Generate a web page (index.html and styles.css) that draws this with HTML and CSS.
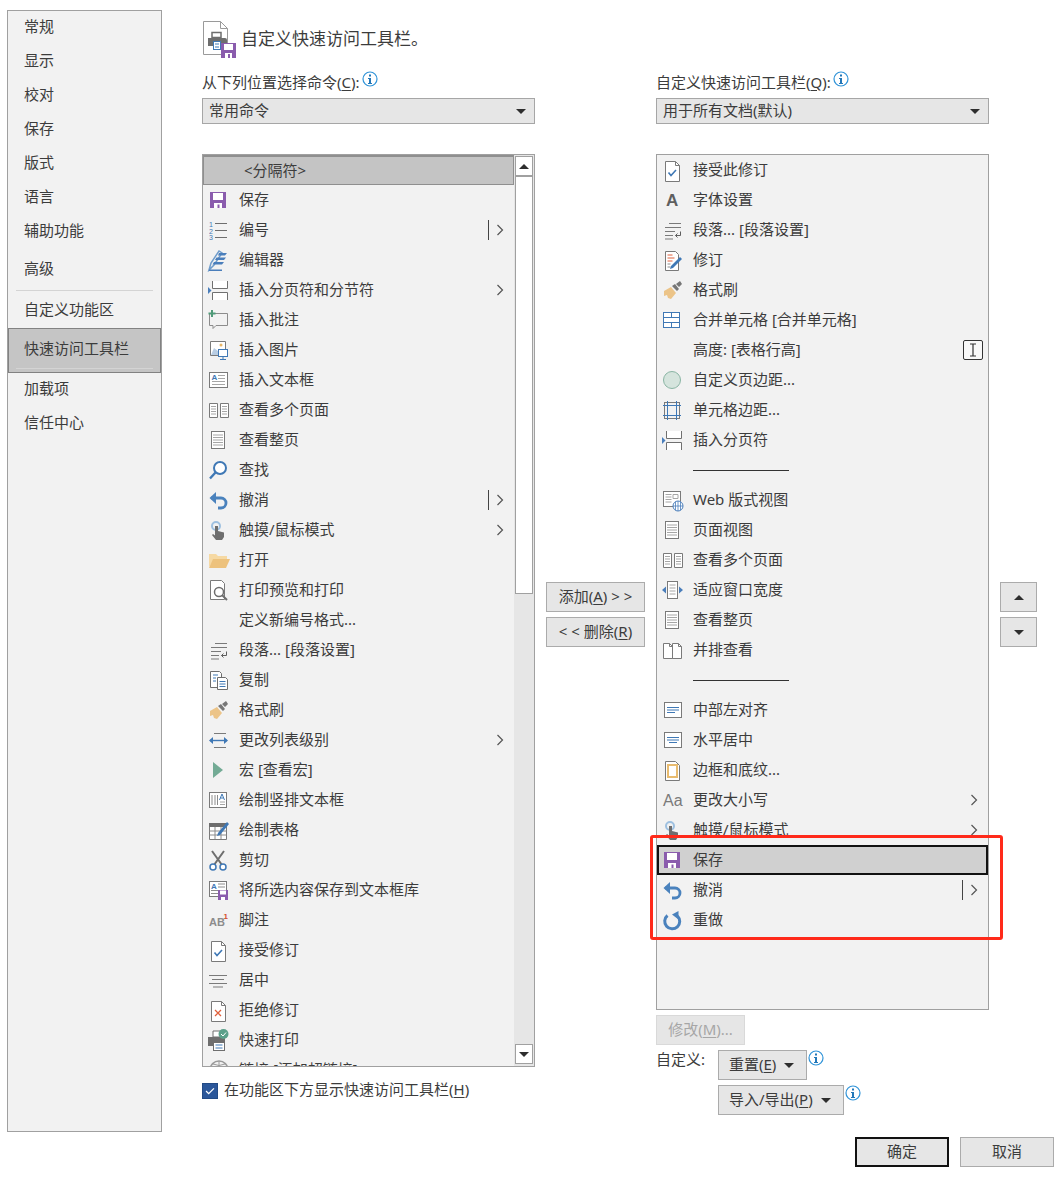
FILE: index.html
```html
<!DOCTYPE html>
<html lang="zh-CN">
<head>
  <meta charset="UTF-8">
  <title>自定义快速访问工具栏</title>
  <link rel="stylesheet" href="styles.css">
</head>
<body>
  <svg class="defs" width="0" height="0">
    <defs>
      <symbol id="i-save" viewBox="0 0 24 24"><rect x="4" y="4" width="16" height="16" fill="#8a5cad"/><rect x="7" y="5" width="10" height="7" fill="#fff"/><rect x="8" y="15" width="8" height="5" fill="#fff"/><rect x="11.500" y="16.500" width="2" height="3.500" fill="#8a5cad"/></symbol>
      <symbol id="i-number" viewBox="0 0 24 24"><text class="tiny" x="3" y="8.500" fill="#3f78b5">1</text><text class="tiny" x="3" y="15.500" fill="#3f78b5">2</text><text class="tiny" x="3" y="22" fill="#3f78b5">3</text><path d="M9 5.500h12M9 12.500h12M9 19.500h12" stroke="#6e6e6e" fill="none"/></symbol>
      <symbol id="i-editor" viewBox="0 0 24 24"><path d="M3 22l2-7L13 3l3 2-8 12z" fill="none" stroke="#6f9ccb" stroke-width="1.500"/><path d="M13 5h8l-2 2.500h-7zM10.500 9.500h9.500l-2 2.500H9zM8 14h10l-2 2.500H6.500zM3 21.500h13v1.500H3z" fill="#4a7ebb"/></symbol>
      <symbol id="i-break" viewBox="0 0 24 24"><rect x="6" y="3" width="16" height="8" fill="#fff"/><rect x="6" y="14" width="16" height="8" fill="#fff"/><path d="M6.500 3v7.500h15V3M6.500 22v-7.500h15V22" stroke="#707070" fill="none"/><path d="M2 9l3.500 3.500L2 16z" fill="#4a7ebb"/></symbol>
      <symbol id="i-comment" viewBox="0 0 24 24"><path d="M3.500 5.500h18v12H10l-3 3v-3H3.500z" fill="none" stroke="#8c8c8c"/><path d="M6 2v7M2.500 5.500h7" stroke="#4f9a78" stroke-width="2"/></symbol>
      <symbol id="i-picture" viewBox="0 0 24 24"><path d="M4.500 3.500h15v14h-15z" fill="#fff" stroke="#7a7a7a"/><circle cx="15" cy="7" r="1.500" fill="#e8b565"/><path d="M5 17l3-7 4 3v4z" fill="#b9cde3"/><rect x="12.500" y="11.500" width="9" height="7" fill="#fff" stroke="#3f78b5"/><path d="M17 18.500v3M14 21.500h6" stroke="#3f78b5"/></symbol>
      <symbol id="i-textbox" viewBox="0 0 24 24"><rect x="3.500" y="4.500" width="18" height="15" fill="#fff" stroke="#7a7a7a"/><text class="tiny-b" x="5.500" y="12" fill="#3f78b5">A</text><path d="M12 7.500h7M12 10.500h7M6 13.500h13M6 16.500h13" stroke="#a6a6a6"/></symbol>
      <symbol id="i-multi" viewBox="0 0 24 24"><path d="M3.500 5.500h8v14h-8zM14.500 5.500h8v14h-8z" fill="#fff" stroke="#7a7a7a"/><path d="M5 8.500h5M5 11h5M5 13.500h5M5 16h5M16 8.500h5M16 11h5M16 13.500h5M16 16h5" stroke="#a6a6a6"/></symbol>
      <symbol id="i-page" viewBox="0 0 24 24"><rect x="5.500" y="3.500" width="13" height="17" fill="#fff" stroke="#7a7a7a"/><path d="M7 7h10M7 9.500h10M7 12h10M7 14.500h10M7 17h10" stroke="#a6a6a6"/></symbol>
      <symbol id="i-find" viewBox="0 0 24 24"><circle cx="14" cy="10" r="6" fill="#fff" stroke="#3f78b5" stroke-width="2"/><path d="M9.500 14.500L4 20.500" stroke="#3f78b5" stroke-width="2.400"/></symbol>
      <symbol id="i-undo" viewBox="0 0 24 24"><path d="M5 10h10a5 5 0 0 1 0 10h-3" fill="none" stroke="#4a82bd" stroke-width="2.800"/><path d="M10 4L3.500 10l6.500 6z" fill="#4a82bd"/></symbol>
      <symbol id="i-redo" viewBox="0 0 24 24"><path d="M7.500 7.500a7.500 7.500 0 1 0 10 .500" fill="none" stroke="#4a82bd" stroke-width="3"/><path d="M18.500 3v8.500L12 6.500z" fill="#4a82bd"/></symbol>
      <symbol id="i-touch" viewBox="0 0 24 24"><circle cx="10" cy="8" r="4" fill="none" stroke="#9ec0e0" stroke-width="2"/><path d="M9 8h3v5l6 1.500V19l-2 3h-6l-4-5 1-1 2 1.500z" fill="#6e6e6e"/></symbol>
      <symbol id="i-open" viewBox="0 0 24 24"><path d="M3 19V6h7l2 2h9v3H9z" fill="#f6d9a3"/><path d="M3 20L7 11h17l-4 9z" fill="#edc27d"/></symbol>
      <symbol id="i-preview" viewBox="0 0 24 24"><path d="M4.500 2.500h11l3 3v16h-14z" fill="#fff" stroke="#7a7a7a"/><circle cx="13" cy="14" r="4.500" fill="#fff" stroke="#6e6e6e" stroke-width="1.500"/><path d="M16 17l5 5" stroke="#6e6e6e" stroke-width="2"/></symbol>
      <symbol id="i-para" viewBox="0 0 24 24"><path d="M9 5.500h12M5 9.500h16M5 13.500h10M5 17.500h8M5 21h8" stroke="#7a7a7a" fill="none"/><path d="M20.500 13.500v4h-5M17.500 15.500l-2 2 2 2" stroke="#5d5d5d" fill="none"/></symbol>
      <symbol id="i-copy" viewBox="0 0 24 24"><path d="M4.500 3.500h9l2 2v14h-11z" fill="#fff" stroke="#6e6e6e"/><path d="M11.500 9.500h8l2 2v10h-10z" fill="#fff" stroke="#6e6e6e"/><path d="M7 7h5M7 10h3M7 13h3M13.500 13.500h6M13.500 16h6M13.500 18.500h6" stroke="#3f78b5"/></symbol>
      <symbol id="i-brush" viewBox="0 0 24 24"><path d="M4 13l7-4 5 6-5 6-3-1-1-3-3 1z" fill="#ecc488"/><path d="M12 8l3-2 4 5-2 2zM16 6l4-3 2 3-3 3z" fill="#767676"/></symbol>
      <symbol id="i-level" viewBox="0 0 24 24"><path d="M8 5.500h12M8 19.500h12" stroke="#7a7a7a"/><path d="M4 12.500h17" stroke="#3f78b5" stroke-width="1.400"/><path d="M3 12.500l4-3.500v7zM22 12.500l-4-3.500v7z" fill="#3f78b5"/></symbol>
      <symbol id="i-macro" viewBox="0 0 24 24"><path d="M7 4l10 8-10 8z" fill="#73ab95"/></symbol>
      <symbol id="i-vbox" viewBox="0 0 24 24"><rect x="3.500" y="4.500" width="17" height="15" fill="#fff" stroke="#7a7a7a"/><path d="M6 7v10M9 7v10M11.500 7v10" stroke="#8c8c8c"/><path d="M13.500 12l2.500-6 2.500 6M14.500 10h3" stroke="#3f78b5" fill="none"/><path d="M14 14h5M14 16.500h5" stroke="#a6a6a6"/></symbol>
      <symbol id="i-table" viewBox="0 0 24 24"><path d="M3.500 5.500h17v16h-17z" fill="#fff" stroke="#7a7a7a"/><rect x="3" y="5" width="18" height="4" fill="#6e6e6e"/><path d="M3.500 13h17M3.500 17h17M9 9v12M15 9v12" stroke="#8c8c8c"/><path d="M12 15l9-11 2 2-9 11-3 1z" fill="#3f78b5"/></symbol>
      <symbol id="i-cut" viewBox="0 0 24 24"><path d="M6 3l10 14M18 3L8 17" stroke="#6e6e6e" stroke-width="2"/><circle cx="7" cy="19" r="3" fill="#fff" stroke="#3f78b5" stroke-width="1.500"/><circle cx="17" cy="19" r="3" fill="#fff" stroke="#3f78b5" stroke-width="1.500"/></symbol>
      <symbol id="i-gallery" viewBox="0 0 24 24"><rect x="3.500" y="3.500" width="17" height="15" fill="#fff" stroke="#7a7a7a"/><text class="tiny-b" x="5" y="10.500" fill="#3f78b5">A</text><path d="M12 6h7M12 9h7M5 12.500h7M5 15.500h7" stroke="#8c8c8c"/><rect x="12" y="12" width="10" height="10" fill="#8a5cad"/><rect x="14" y="12.500" width="6" height="4" fill="#fff"/><rect x="15" y="19" width="4" height="3" fill="#fff"/></symbol>
      <symbol id="i-foot" viewBox="0 0 24 24"><text class="ab" x="3" y="18" fill="#8c8c8c">AB</text><text class="tiny-b" x="17.500" y="11" fill="#d4502a">1</text></symbol>
      <symbol id="i-accept" viewBox="0 0 24 24"><path d="M5.500 3.500h10l4 4v16h-14z" fill="#fff" stroke="#7a7a7a"/><path d="M15.500 3.500v4h4" fill="none" stroke="#7a7a7a"/><path d="M8.500 14.500l2.500 3 5-5.500" fill="none" stroke="#3f78b5" stroke-width="1.600"/></symbol>
      <symbol id="i-center" viewBox="0 0 24 24"><path d="M3 7.500h18M6 11.500h12M3 15.500h18M7 19h10" stroke="#7a7a7a"/></symbol>
      <symbol id="i-reject" viewBox="0 0 24 24"><path d="M5.500 3.500h10l4 4v16h-14z" fill="#fff" stroke="#7a7a7a"/><path d="M15.500 3.500v4h4" fill="none" stroke="#7a7a7a"/><path d="M9 12l6 6M15 12l-6 6" stroke="#e0603c" stroke-width="1.300"/></symbol>
      <symbol id="i-qprint" viewBox="0 0 24 24"><path d="M7 3h10v6H7z" fill="#fff" stroke="#6e6e6e"/><path d="M2 9h17v9H2z" fill="#6e6e6e"/><rect x="7.500" y="14.500" width="11" height="8" fill="#fff" stroke="#6e6e6e"/><path d="M9.500 17h7M9.500 20h7" stroke="#3f78b5"/><circle cx="17.500" cy="6" r="5" fill="#5ba08a"/><path d="M15 6l2 2 3-3.500" fill="none" stroke="#fff"/></symbol>
      <symbol id="i-link" viewBox="0 0 24 24"><circle cx="13" cy="12" r="9" fill="none" stroke="#9a9a9a" stroke-width="1.500"/><path d="M4 12h18M13 3v18M7 6q6 3 12 0" fill="none" stroke="#9a9a9a"/></symbol>
      <symbol id="i-merge" viewBox="0 0 24 24"><rect x="3.500" y="4.500" width="16" height="15" fill="#fff" stroke="#3f78b5"/><path d="M3.500 9.500h16M3.500 14.500h16M11.500 4.500v5M11.500 14.500v5" stroke="#3f78b5"/></symbol>
      <symbol id="i-revise" viewBox="0 0 24 24"><path d="M5.500 3.500h10l3 3v16h-13z" fill="#fff" stroke="#7a7a7a"/><path d="M7.500 7h5M7.500 10h7M7.500 13h5" stroke="#e0603c"/><path d="M7.500 16h3M7.500 19h3" stroke="#8c8c8c"/><path d="M10 21l1-3 9-9 2 2-9 9z" fill="#3f78b5"/></symbol>
      <symbol id="i-circle" viewBox="0 0 24 24"><circle cx="12" cy="12" r="8.500" fill="#d5e4dd" stroke="#8ab5a4"/></symbol>
      <symbol id="i-cell" viewBox="0 0 24 24"><rect x="4.500" y="4.500" width="15" height="16" fill="none" stroke="#7a7a7a"/><path d="M7.500 3v19M16.500 3v19M3 7.500h18M3 17.500h18" stroke="#3f78b5"/></symbol>
      <symbol id="i-web" viewBox="0 0 24 24"><rect x="3.500" y="3.500" width="17" height="15" fill="#fff" stroke="#7a7a7a"/><path d="M5.500 6.500h6M5.500 9h6M5.500 11.500h6M5.500 14h6M13 6.500h5v4h-5z" fill="none" stroke="#a6a6a6"/><circle cx="18" cy="18" r="5" fill="#fff" stroke="#4a7ebb"/><path d="M13 18h10M18 13v10M15.500 14v8M20.500 14v8" stroke="#4a7ebb" stroke-width=".800"/></symbol>
      <symbol id="i-fit" viewBox="0 0 24 24"><rect x="7.500" y="3.500" width="10" height="17" fill="#fff" stroke="#7a7a7a"/><path d="M9.500 7h6M9.500 10h6M9.500 13h6M9.500 16h6" stroke="#a6a6a6"/><path d="M2 12l4-3.500v7zM23 12l-4-3.500v7z" fill="#4a7ebb"/></symbol>
      <symbol id="i-side" viewBox="0 0 24 24"><path d="M3.500 5.500h6l3 3v12h-9zM12.500 20.500h9v-12l-3-3h-6v15z" fill="#fff" stroke="#7a7a7a"/><path d="M9.500 5.500v3h3M18.500 5.500v3h3" fill="none" stroke="#7a7a7a"/></symbol>
      <symbol id="i-left" viewBox="0 0 24 24"><rect x="4.500" y="4.500" width="17" height="15" fill="#fff" stroke="#7a7a7a"/><path d="M7 9.500h12M7 12h12M7 14.500h8" stroke="#3f78b5"/></symbol>
      <symbol id="i-hcenter" viewBox="0 0 24 24"><rect x="4.500" y="4.500" width="17" height="15" fill="#fff" stroke="#7a7a7a"/><path d="M7 9.500h12M7 12h12M9 14.500h8" stroke="#3f78b5"/></symbol>
      <symbol id="i-border" viewBox="0 0 24 24"><path d="M5.500 3.500h10l4 4v15h-14z" fill="#fff" stroke="#7a7a7a"/><rect x="8" y="7" width="9" height="12" fill="#fff" stroke="#e8bb6f" stroke-width="2"/></symbol>
      <symbol id="i-more" viewBox="0 0 8 12"><path d="M1.500 1l5 5-5 5" fill="none" stroke="#555" stroke-width="1.200"/></symbol>
      <symbol id="i-info" viewBox="0 0 16 16"><circle cx="8" cy="8" r="7" fill="#fff" stroke="#2f93d8" stroke-width="1.200"/><rect x="7" y="3.500" width="2" height="2" fill="#2277b8"/><path d="M6 7h3v5H7V8H6z" fill="#2277b8"/><path d="M6 12h4v1H6z" fill="#2277b8"/></symbol>
    </defs>
  </svg>

  <div class="page">
    <nav class="sidebar">
      <div class="nav-item">常规</div>
      <div class="nav-item">显示</div>
      <div class="nav-item">校对</div>
      <div class="nav-item">保存</div>
      <div class="nav-item">版式</div>
      <div class="nav-item">语言</div>
      <div class="nav-item">辅助功能</div>
      <div class="nav-item nav-gap">高级</div>
      <div class="nav-rule"></div>
      <div class="nav-item">自定义功能区</div>
      <div class="nav-item nav-current">快速访问工具栏</div>
      <div class="nav-item">加载项</div>
      <div class="nav-item">信任中心</div>
    </nav>

    <main class="main">
      <div class="title">
        <svg class="title-icon" viewBox="0 0 36 40">
          <path d="M1.500 1.500h17l7 7v26h-24z" fill="#fff" stroke="#9a9a9a"/>
          <path d="M18.500 1.500v7h7" fill="none" stroke="#9a9a9a"/>
          <path d="M10 12.500h9v5h-9z" fill="#fff" stroke="#6e6e6e" stroke-width="1.500"/>
          <path d="M6 18h17a2 2 0 0 1 2 2v6H6z" fill="#6e6e6e"/>
          <rect x="11.500" y="21.500" width="7" height="8" fill="#fff" stroke="#3f78b5"/>
          <path d="M13 24h4M13 27h4" stroke="#3f78b5"/>
          <rect x="19" y="23" width="15" height="15" fill="#8a5cad"/>
          <rect x="22" y="24" width="9" height="6" fill="#fff"/>
          <rect x="23" y="33" width="7" height="5" fill="#fff"/>
          <rect x="26" y="34" width="2" height="4" fill="#8a5cad"/>
        </svg>
        <span>自定义快速访问工具栏。</span>
      </div>

      <section class="col">
        <div class="field-label"><span>从下列位置选择命令(<u>C</u>):</span><svg class="info"><use href="#i-info"/></svg></div>
        <div class="select"><span>常用命令</span><i class="caret"></i></div>
        <div class="listbox listbox-left">
          <div class="rows">
            <div class="row row-sel"><span class="no-icon"></span><span class="sep-name">&lt;分隔符&gt;</span></div>
            <div class="row"><svg class="ico"><use href="#i-save"/></svg>保存</div>
            <div class="row"><svg class="ico"><use href="#i-number"/></svg>编号<span class="split"></span><svg class="more"><use href="#i-more"/></svg></div>
            <div class="row"><svg class="ico"><use href="#i-editor"/></svg>编辑器</div>
            <div class="row"><svg class="ico"><use href="#i-break"/></svg>插入分页符和分节符<svg class="more more-end"><use href="#i-more"/></svg></div>
            <div class="row"><svg class="ico"><use href="#i-comment"/></svg>插入批注</div>
            <div class="row"><svg class="ico"><use href="#i-picture"/></svg>插入图片</div>
            <div class="row"><svg class="ico"><use href="#i-textbox"/></svg>插入文本框</div>
            <div class="row"><svg class="ico"><use href="#i-multi"/></svg>查看多个页面</div>
            <div class="row"><svg class="ico"><use href="#i-page"/></svg>查看整页</div>
            <div class="row"><svg class="ico"><use href="#i-find"/></svg>查找</div>
            <div class="row"><svg class="ico"><use href="#i-undo"/></svg>撤消<span class="split"></span><svg class="more"><use href="#i-more"/></svg></div>
            <div class="row"><svg class="ico"><use href="#i-touch"/></svg>触摸/鼠标模式<svg class="more more-end"><use href="#i-more"/></svg></div>
            <div class="row"><svg class="ico"><use href="#i-open"/></svg>打开</div>
            <div class="row"><svg class="ico"><use href="#i-preview"/></svg>打印预览和打印</div>
            <div class="row"><span class="no-icon"></span>定义新编号格式...</div>
            <div class="row"><svg class="ico"><use href="#i-para"/></svg>段落... [段落设置]</div>
            <div class="row"><svg class="ico"><use href="#i-copy"/></svg>复制</div>
            <div class="row"><svg class="ico"><use href="#i-brush"/></svg>格式刷</div>
            <div class="row"><svg class="ico"><use href="#i-level"/></svg>更改列表级别<svg class="more more-end"><use href="#i-more"/></svg></div>
            <div class="row"><svg class="ico"><use href="#i-macro"/></svg>宏 [查看宏]</div>
            <div class="row"><svg class="ico"><use href="#i-vbox"/></svg>绘制竖排文本框</div>
            <div class="row"><svg class="ico"><use href="#i-table"/></svg>绘制表格</div>
            <div class="row"><svg class="ico"><use href="#i-cut"/></svg>剪切</div>
            <div class="row"><svg class="ico"><use href="#i-gallery"/></svg>将所选内容保存到文本框库</div>
            <div class="row"><svg class="ico"><use href="#i-foot"/></svg>脚注</div>
            <div class="row"><svg class="ico"><use href="#i-accept"/></svg>接受修订</div>
            <div class="row"><svg class="ico"><use href="#i-center"/></svg>居中</div>
            <div class="row"><svg class="ico"><use href="#i-reject"/></svg>拒绝修订</div>
            <div class="row"><svg class="ico"><use href="#i-qprint"/></svg>快速打印</div>
            <div class="row"><svg class="ico"><use href="#i-link"/></svg>链接 [添加超链接]</div>
          </div>
          <div class="scrollbar">
            <div class="scroll-btn"><i class="caret caret-up"></i></div>
            <div class="scroll-thumb"></div>
            <div class="scroll-track"></div>
            <div class="scroll-btn"><i class="caret"></i></div>
          </div>
        </div>
        <label class="check-line"><span class="checkbox"><svg viewBox="0 0 16 16"><path d="M3.500 8l3 3 6-6" fill="none" stroke="#fff" stroke-width="1.500"/></svg></span><span>在功能区下方显示快速访问工具栏(<u>H</u>)</span></label>
      </section>

      <section class="col col-actions">
        <button class="btn btn-wide">添加(<u>A</u>) &gt; &gt;</button>
        <button class="btn btn-wide">&lt; &lt; 删除(<u>R</u>)</button>
      </section>

      <section class="col">
        <div class="field-label"><span>自定义快速访问工具栏(<u>Q</u>):</span><svg class="info"><use href="#i-info"/></svg></div>
        <div class="select"><span>用于所有文档(默认)</span><i class="caret"></i></div>
        <div class="listbox listbox-right">
          <div class="rows">
            <div class="row"><svg class="ico"><use href="#i-accept"/></svg>接受此修订</div>
            <div class="row"><svg class="ico"><text class="big-a" x="6" y="18" fill="#5f5f5f">A</text></svg>字体设置</div>
            <div class="row"><svg class="ico"><use href="#i-para"/></svg>段落... [段落设置]</div>
            <div class="row"><svg class="ico"><use href="#i-revise"/></svg>修订</div>
            <div class="row"><svg class="ico"><use href="#i-brush"/></svg>格式刷</div>
            <div class="row"><svg class="ico"><use href="#i-merge"/></svg>合并单元格 [合并单元格]</div>
            <div class="row"><span class="no-icon"></span>高度: [表格行高]<span class="cursor-box"><svg viewBox="0 0 12 14"><path d="M3 1h6M3 13h6M6 1v12" fill="none" stroke="#333" stroke-width="1.200"/></svg></span></div>
            <div class="row"><svg class="ico"><use href="#i-circle"/></svg>自定义页边距...</div>
            <div class="row"><svg class="ico"><use href="#i-cell"/></svg>单元格边距...</div>
            <div class="row"><svg class="ico"><use href="#i-break"/></svg>插入分页符</div>
            <div class="row"><span class="no-icon"></span><span class="sep-line"></span></div>
            <div class="row"><svg class="ico"><use href="#i-web"/></svg>Web 版式视图</div>
            <div class="row"><svg class="ico"><use href="#i-page"/></svg>页面视图</div>
            <div class="row"><svg class="ico"><use href="#i-multi"/></svg>查看多个页面</div>
            <div class="row"><svg class="ico"><use href="#i-fit"/></svg>适应窗口宽度</div>
            <div class="row"><svg class="ico"><use href="#i-page"/></svg>查看整页</div>
            <div class="row"><svg class="ico"><use href="#i-side"/></svg>并排查看</div>
            <div class="row"><span class="no-icon"></span><span class="sep-line"></span></div>
            <div class="row"><svg class="ico"><use href="#i-left"/></svg>中部左对齐</div>
            <div class="row"><svg class="ico"><use href="#i-hcenter"/></svg>水平居中</div>
            <div class="row"><svg class="ico"><use href="#i-border"/></svg>边框和底纹...</div>
            <div class="row"><svg class="ico"><text class="aa" x="3" y="18" fill="#7a7a7a">Aa</text></svg>更改大小写<svg class="more more-end"><use href="#i-more"/></svg></div>
            <div class="row"><svg class="ico"><use href="#i-touch"/></svg>触摸/鼠标模式<svg class="more more-end"><use href="#i-more"/></svg></div>
            <div class="row row-focus"><svg class="ico"><use href="#i-save"/></svg>保存</div>
            <div class="row"><svg class="ico"><use href="#i-undo"/></svg>撤消<span class="split"></span><svg class="more"><use href="#i-more"/></svg></div>
            <div class="row"><svg class="ico"><use href="#i-redo"/></svg>重做</div>
          </div>
        </div>
        <button class="btn btn-off">修改(<u>M</u>)...</button>
        <div class="custom-line">
          <span class="custom-label">自定义:</span>
          <div class="custom-btns">
            <div class="btn-line"><button class="btn btn-menu btn-reset"><span>重置(<u>E</u>)</span><i class="caret"></i></button><svg class="info"><use href="#i-info"/></svg></div>
            <div class="btn-line"><button class="btn btn-menu btn-port"><span>导入/导出(<u>P</u>)</span><i class="caret"></i></button><svg class="info"><use href="#i-info"/></svg></div>
          </div>
        </div>
      </section>

      <section class="col col-actions">
        <button class="btn btn-move"><i class="caret caret-up"></i></button>
        <button class="btn btn-move"><i class="caret"></i></button>
      </section>

      <footer class="footer">
        <button class="btn btn-foot btn-ok">确定</button>
        <button class="btn btn-foot">取消</button>
      </footer>
    </main>
  </div>

  <div class="callout"></div>
</body>
</html>
```

FILE: styles.css
```css
* {
  box-sizing: border-box;
}
body {
  margin: 0;
  width: 1061px;
  height: 1177px;
  position: relative;
  overflow: hidden;
  background: #ffffff;
  font-family: "Noto Sans", "Noto Sans CJK SC", sans-serif;
  font-size: 15px;
  color: #3c3c3c;
}
u {
  text-underline-offset: 2px;
}
.defs {
  position: absolute;
}
.page {
  display: flex;
  align-items: flex-start;
  padding-left: 7px;
}

/* left nav */
.sidebar {
  width: 155px;
  height: 1122px;
  margin-top: 10px;
  background: #f2f2f2;
  border: 1px solid #a0a0a0;
}
.nav-item {
  height: 34px;
  line-height: 31px;
  padding-left: 16px;
}
.nav-gap {
  margin-top: 4px;
}
.nav-rule {
  height: 1px;
  margin: 3px 8px 3px 8px;
  background: #d4d4d4;
}
.nav-current {
  position: relative;
  height: 45px;
  line-height: 39px;
  background: #c5c5c5;
  border: 1px solid #828282;
  padding-left: 15px;
}
.nav-current::after {
  content: "";
  position: absolute;
  left: 7px;
  right: 7px;
  bottom: 3px;
  height: 1px;
  background: #d4d4d4;
}

/* main area */
.main {
  width: 852px;
  margin-left: 40px;
  display: grid;
  grid-template-columns: 333px 99px 333px 37px;
  column-gap: 11px;
  padding-top: 20px;
}
.title {
  grid-column: 1 / -1;
  height: 52px;
  display: flex;
  align-items: flex-start;
  gap: 3px;
  font-size: 17px;
}
.title span {
  line-height: 37px;
}
.title-icon {
  width: 36px;
  height: 40px;
}
.col {
  display: flex;
  flex-direction: column;
  align-items: flex-start;
}
.col-actions {
  padding-top: 510px;
  gap: 5px;
}
.field-label {
  height: 20px;
  line-height: 20px;
  display: flex;
  white-space: pre;
}
.info {
  width: 16px;
  height: 16px;
  margin-left: 2px;
  margin-top: -1px;
}
.select {
  width: 333px;
  height: 26px;
  margin-top: 6px;
  padding: 0 8px 3px 6px;
  display: flex;
  align-items: center;
  justify-content: space-between;
  background: #e6e6e6;
  border: 1px solid #a6a6a6;
}
.select .caret {
  margin-top: 3px;
}
.caret {
  display: inline-block;
  width: 0;
  height: 0;
  border: 5px solid transparent;
  border-top: 5px solid #2e2e2e;
  border-bottom: 0;
}
.caret-up {
  border-top: 0;
  border-bottom: 5px solid #2e2e2e;
}

/* list boxes */
.listbox {
  width: 333px;
  margin-top: 30px;
  display: flex;
  overflow: hidden;
  background: #f2f2f2;
  border: 1px solid #a0a0a0;
}
.listbox-left {
  height: 913px;
}
.listbox-right {
  height: 856px;
}
.rows {
  flex: 1;
  min-width: 0;
}
.row {
  height: 30px;
  padding-left: 3px;
  padding-bottom: 4px;
  display: flex;
  align-items: center;
  white-space: pre;
}
.ico,
.no-icon {
  flex: none;
  width: 24px;
  height: 24px;
  margin-top: 4px;
  margin-right: 9px;
}
.tiny {
  font: 7px "Liberation Sans", sans-serif;
}
.tiny-b {
  font: bold 8px "Liberation Sans", sans-serif;
}
.ab {
  font: bold 11px "Liberation Sans", sans-serif;
}
.big-a {
  font: bold 17px "Liberation Sans", sans-serif;
}
.aa {
  font: 16px "Liberation Sans", sans-serif;
}
.row-sel {
  background: #c4c4c4;
  border: 1px solid #8f8f8f;
  border-top-width: 2px;
  padding-left: 2px;
  padding-bottom: 3px;
}
.sep-name {
  margin-left: 5px;
}
.sep-line {
  width: 96px;
  height: 1px;
  margin-top: 4px;
  background: #333333;
}
.row-focus {
  background: #d0d0d0;
  border: 2px solid #111111;
  padding-left: 1px;
  padding-bottom: 4px;
}
.row-focus .ico {
  margin-top: 4px;
}
.split {
  width: 1px;
  height: 20px;
  margin-top: 4px;
  margin-left: auto;
  margin-right: 7px;
  background: #444444;
}
.more {
  flex: none;
  width: 8px;
  height: 12px;
  margin-top: 4px;
  margin-right: 10px;
}
.more-end {
  margin-left: auto;
}
.cursor-box {
  width: 20px;
  height: 20px;
  margin-top: 4px;
  margin-left: auto;
  margin-right: 5px;
  padding: 2px 3px;
  background: #f8f8f8;
  border: 1px solid #333333;
  border-radius: 2px;
  display: flex;
}
.scrollbar {
  flex: none;
  width: 20px;
  display: flex;
  flex-direction: column;
  padding: 1px 1px 2px;
  background: #e6e6e6;
}
.scroll-btn {
  height: 20px;
  display: flex;
  align-items: center;
  justify-content: center;
  background: #ffffff;
  border: 1px solid #a0a0a0;
}
.scroll-thumb {
  height: 418px;
  background: #ffffff;
  border: 1px solid #a0a0a0;
}
.scroll-track {
  flex: 1;
}

.check-line {
  height: 18px;
  margin-top: 15px;
  display: flex;
  align-items: flex-start;
  gap: 6px;
  line-height: 15px;
  white-space: pre;
}
.checkbox {
  width: 16px;
  height: 16px;
  margin-top: 1px;
  background: #2b579a;
  border: 1px solid #224a85;
  display: flex;
}

/* buttons */
.btn {
  height: 30px;
  padding: 0 0 3px;
  font: inherit;
  color: inherit;
  background: #e6e6e6;
  border: 1px solid #ababab;
  white-space: pre;
}
.btn-wide {
  width: 99px;
}
.btn-move {
  width: 37px;
  padding: 0;
  display: flex;
  align-items: center;
  justify-content: center;
}
.btn-off {
  width: 89px;
  margin-top: 5px;
  color: #a6a6a6;
  background: #e6e6e6;
  border-color: #d9d9d9;
}
.custom-line {
  display: flex;
  margin-top: 5px;
}
.custom-label {
  width: 62px;
  line-height: 18px;
}
.custom-btns {
  display: flex;
  flex-direction: column;
  gap: 5px;
}
.btn-line {
  display: flex;
  align-items: flex-start;
}
.btn-menu {
  padding: 0 0 3px 10px;
  display: flex;
  align-items: center;
  gap: 8px;
}
.btn-menu .caret {
  margin-top: 3px;
}
.btn-reset {
  width: 89px;
}
.btn-port {
  width: 126px;
}
.btn-line .info {
  margin: 0 0 0 1px;
}
.footer {
  grid-column: 1 / -1;
  display: flex;
  justify-content: flex-end;
  gap: 11px;
  margin-top: 22px;
  margin-right: -17px;
}
.btn-foot {
  width: 94px;
}
.btn-ok {
  border: 2px solid #111111;
}

/* red box drawn over the screenshot */
.callout {
  position: absolute;
  left: 650px;
  top: 835px;
  width: 353px;
  height: 105px;
  border: 3px solid #ff2a1a;
  border-radius: 3px;
}
```
